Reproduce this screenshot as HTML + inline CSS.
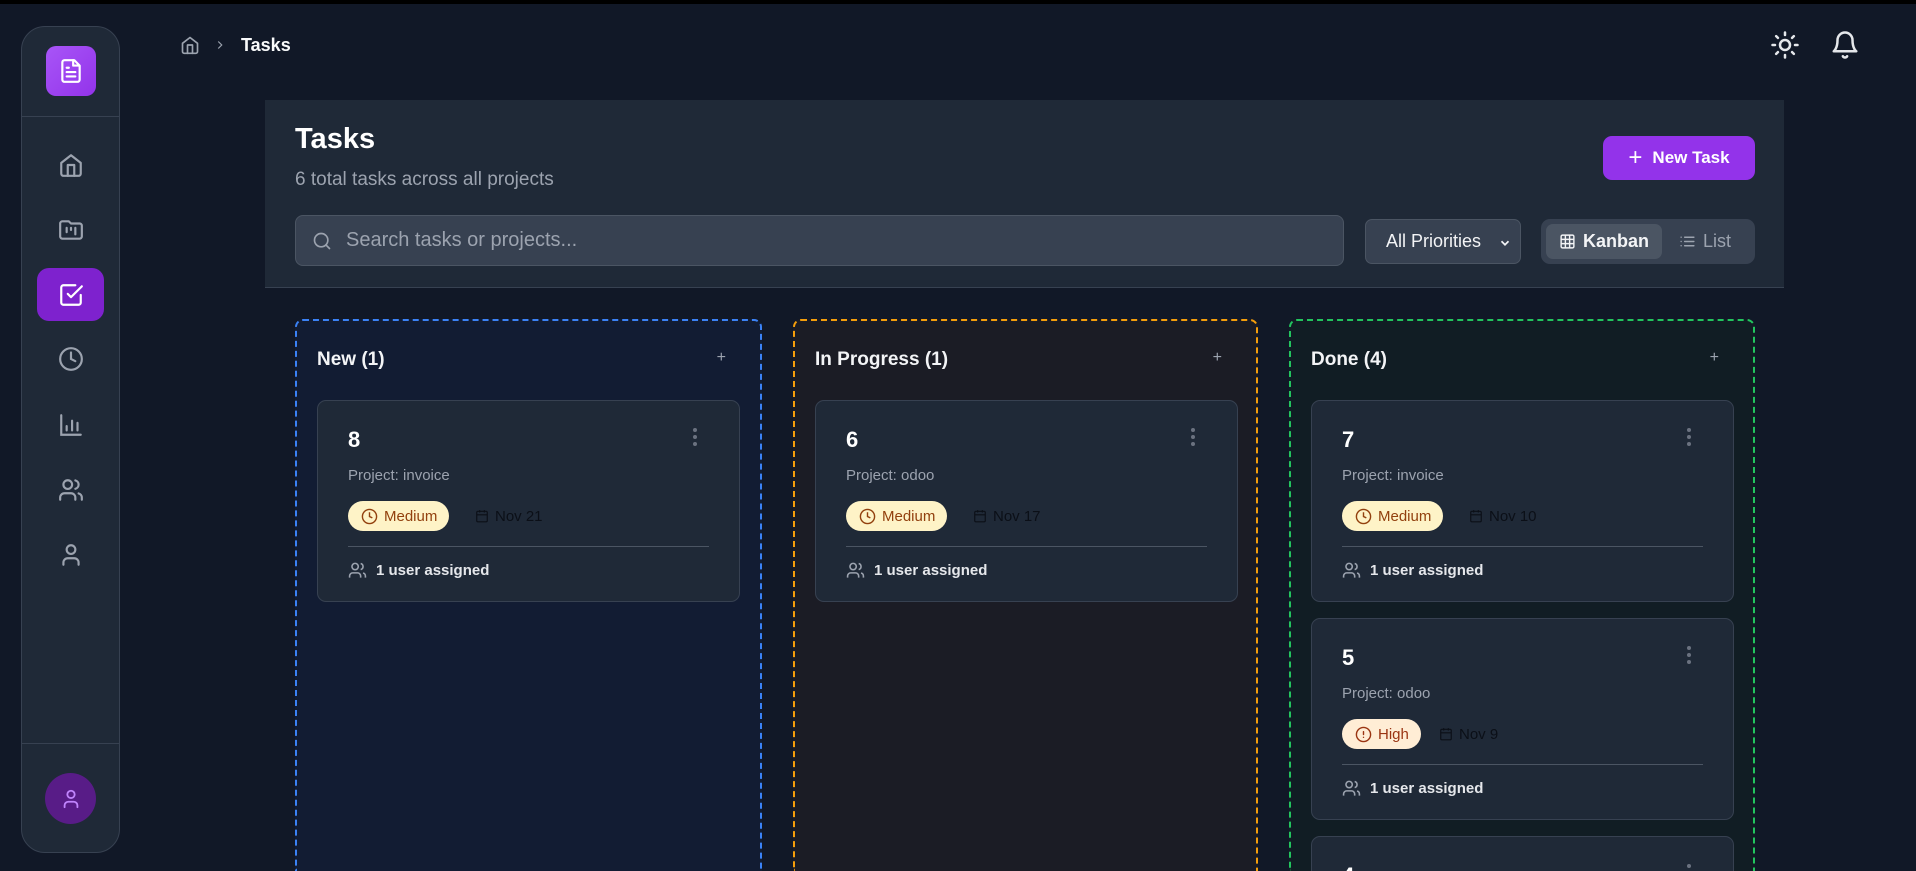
<!DOCTYPE html>
<html><head><meta charset="utf-8"><style>
*{box-sizing:border-box;margin:0;padding:0}
html,body{width:1916px;height:871px;overflow:hidden}
body{background:#111827;font-family:"Liberation Sans",sans-serif;color:#f9fafb;position:relative}
#wrap{position:relative;width:1916px;height:871px;overflow:hidden}
.abs{position:absolute}
svg{display:block}
.topline{left:0;top:0;width:1916px;height:4px;background:#000}
.side{left:21px;top:26px;width:99px;height:827px;background:#1f2937;border:1px solid #374151;border-radius:24px}
.logo{left:24px;top:19px;width:50px;height:50px;border-radius:10px;background:linear-gradient(135deg,#a855f7,#9333ea);display:flex;align-items:center;justify-content:center}
.sep{left:0;width:97px;height:1px;background:#374151}
.nav{left:15px;width:67px;height:53px;border-radius:12px;display:flex;align-items:center;justify-content:center}
.nav.act{background:#7e22ce}
.avatar{left:23px;top:746px;width:51px;height:51px;border-radius:50%;background:#581c87;display:flex;align-items:center;justify-content:center}
.panel{left:265px;top:100px;width:1519px;height:188px;background:#1f2937;border-bottom:1px solid #374151}
.btn{left:1603px;top:136px;width:152px;height:44px;background:#9333ea;border-radius:9px;display:flex;align-items:center;justify-content:center;gap:10px;font-weight:bold;font-size:17px;color:#fff}
.search{left:295px;top:215px;width:1049px;height:51px;background:#374151;border:1px solid #4b5563;border-radius:8px;display:flex;align-items:center;padding-left:16px;gap:14px;color:#9ca3af;font-size:20px}
.sel{left:1365px;top:219px;width:156px;height:45px;background:#374151;border:1px solid #4b5563;border-radius:7px;display:flex;align-items:center;padding-left:20px;font-size:18px;color:#f3f4f6}
.tog{left:1541px;top:219px;width:214px;height:45px;background:#374151;border-radius:9px}
.col{top:319px;height:552px;border:2px dashed;border-bottom:none;border-radius:8px 8px 0 0;overflow:hidden}
.colh{position:absolute;left:20px;top:28px;font-weight:bold;font-size:19px;color:#f3f4f6}
.plus{position:absolute;right:34px;top:28px;color:#9ca3af;font-size:16px}
.card{position:absolute;left:20px;width:423px;height:202px;background:#1f2937;border:1px solid #374151;border-radius:9px}
.num{position:absolute;left:30px;top:26px;font-weight:bold;font-size:22px;color:#fff}
.proj{position:absolute;left:30px;top:66px;font-size:15px;color:#9ca3af}
.badge{position:absolute;left:30px;top:100px;height:30px;border-radius:15px;display:flex;align-items:center;gap:6px;padding:0 12px 0 13px;font-size:15px}
.med{background:#fef3c7;color:#92400e}
.high{background:#ffedd5;color:#9a3412}
.date{position:absolute;top:100px;height:30px;display:flex;align-items:center;gap:6px;font-size:15px;color:#0b0f17}
.div{position:absolute;left:30px;right:30px;top:145px;height:1px;background:#4b5563}
.asg{position:absolute;left:30px;top:160px;display:flex;align-items:center;gap:9px;font-size:15px;font-weight:bold;color:#e5e7eb}
.keb{position:absolute;right:42px;top:27px;width:4px}
.keb i{display:block;width:4px;height:4px;border-radius:50%;background:#6b7280;margin-bottom:3px}
</style></head><body><div id="wrap">
<div class="abs topline"></div>

<div class="abs side">
 <div class="abs logo"><svg width="26" height="26" viewBox="0 0 24 24" fill="none" stroke="#fff" stroke-width="2" stroke-linecap="round" stroke-linejoin="round"><path d="M15 2H6a2 2 0 0 0-2 2v16a2 2 0 0 0 2 2h12a2 2 0 0 0 2-2V7z"/><path d="M14 2v5h5"/><path d="M10 9H8M16 13H8M16 17H8"/></svg></div>
 <div class="abs sep" style="top:89px"></div>
 <div class="abs nav" style="top:111px"><svg width="26" height="26" viewBox="0 0 24 24" fill="none" stroke="#9ca3af" stroke-width="2" stroke-linecap="round" stroke-linejoin="round"><path d="M3 10l9-7 9 7v10a2 2 0 0 1-2 2H5a2 2 0 0 1-2-2z"/><path d="M9 22V12h6v10"/></svg></div>
 <div class="abs nav" style="top:176px"><svg width="26" height="26" viewBox="0 0 24 24" fill="none" stroke="#9ca3af" stroke-width="2" stroke-linecap="round" stroke-linejoin="round"><path d="M4 20h16a2 2 0 0 0 2-2V8a2 2 0 0 0-2-2h-8L10 4H4a2 2 0 0 0-2 2v12a2 2 0 0 0 2 2z"/><path d="M8 10v4M12 10v2M16 10v6"/></svg></div>
 <div class="abs nav act" style="top:241px"><svg width="26" height="26" viewBox="0 0 24 24" fill="none" stroke="#fff" stroke-width="2" stroke-linecap="round" stroke-linejoin="round"><path d="M9 11l3 3L22 4"/><path d="M21 12v7a2 2 0 0 1-2 2H5a2 2 0 0 1-2-2V5a2 2 0 0 1 2-2h11"/></svg></div>
 <div class="abs nav" style="top:305px"><svg width="26" height="26" viewBox="0 0 24 24" fill="none" stroke="#9ca3af" stroke-width="2" stroke-linecap="round"><circle cx="12" cy="12" r="10"/><path d="M12 6v6l4 2"/></svg></div>
 <div class="abs nav" style="top:371px"><svg width="26" height="26" viewBox="0 0 24 24" fill="none" stroke="#9ca3af" stroke-width="2" stroke-linecap="round"><path d="M3 3v18h18M8 17v-4M13 17V8M18 17v-7"/></svg></div>
 <div class="abs nav" style="top:436px"><svg width="26" height="26" viewBox="0 0 24 24" fill="none" stroke="#9ca3af" stroke-width="2" stroke-linecap="round"><path d="M16 21v-2a4 4 0 0 0-4-4H6a4 4 0 0 0-4 4v2"/><circle cx="9" cy="7" r="4"/><path d="M22 21v-2a4 4 0 0 0-3-3.87M16 3.13a4 4 0 0 1 0 7.75"/></svg></div>
 <div class="abs nav" style="top:501px"><svg width="26" height="26" viewBox="0 0 24 24" fill="none" stroke="#9ca3af" stroke-width="2" stroke-linecap="round"><path d="M19 21v-2a4 4 0 0 0-4-4H9a4 4 0 0 0-4 4v2"/><circle cx="12" cy="7" r="4"/></svg></div>
 <div class="abs sep" style="top:716px"></div>
 <div class="abs avatar"><svg width="22" height="22" viewBox="0 0 24 24" fill="none" stroke="#c084fc" stroke-width="2" stroke-linecap="round"><path d="M19 21v-2a4 4 0 0 0-4-4H9a4 4 0 0 0-4 4v2"/><circle cx="12" cy="7" r="4"/></svg></div>
</div>

<div class="abs" style="left:180px;top:35px"><svg width="20" height="20" viewBox="0 0 24 24" fill="none" stroke="#9ca3af" stroke-width="2" stroke-linecap="round" stroke-linejoin="round"><path d="M3 10l9-7 9 7v10a2 2 0 0 1-2 2H5a2 2 0 0 1-2-2z"/><path d="M9 22V12h6v10"/></svg></div>
<div class="abs" style="left:213px;top:37px"><svg width="14" height="16" viewBox="0 0 24 24" fill="none" stroke="#9ca3af" stroke-width="2"><path d="M9 6l6 6-6 6"/></svg></div>
<div class="abs" style="left:241px;top:35px;font-weight:bold;font-size:18px">Tasks</div>
<div class="abs" style="left:1770px;top:30px"><svg width="30" height="30" viewBox="0 0 24 24" fill="none" stroke="#e5e7eb" stroke-width="2" stroke-linecap="round"><circle cx="12" cy="12" r="4"/><path d="M12 2v2M12 20v2M4.93 4.93l1.41 1.41M17.66 17.66l1.41 1.41M2 12h2M20 12h2M6.34 17.66l-1.41 1.41M19.07 4.93l-1.41 1.41"/></svg></div>
<div class="abs" style="left:1830px;top:30px"><svg width="30" height="30" viewBox="0 0 24 24" fill="none" stroke="#e5e7eb" stroke-width="2" stroke-linecap="round" stroke-linejoin="round"><path d="M6 8a6 6 0 0 1 12 0c0 7 3 9 3 9H3s3-2 3-9"/><path d="M10.3 21a1.94 1.94 0 0 0 3.4 0"/></svg></div>

<div class="abs panel"></div>
<div class="abs" style="left:295px;top:123px;font-weight:bold;font-size:29px;color:#fff">Tasks</div>
<div class="abs" style="left:295px;top:169px;font-size:19px;color:#9ca3af">6 total tasks across all projects</div>
<div class="abs btn"><span style="font-size:24px;font-weight:normal;line-height:1">+</span>New Task</div>
<div class="abs search"><svg width="20" height="20" viewBox="0 0 24 24" fill="none" stroke="#9ca3af" stroke-width="2" stroke-linecap="round"><circle cx="11" cy="11" r="8"/><path d="M21 21l-4.3-4.3"/></svg>Search tasks or projects...</div>
<div class="abs sel">All Priorities<svg style="position:absolute;right:8px;top:16px" width="14" height="14" viewBox="0 0 24 24" fill="none" stroke="#f3f4f6" stroke-width="3"><path d="M6 9l6 6 6-6"/></svg></div>
<div class="abs tog">
 <div class="abs" style="left:5px;top:5px;width:116px;height:35px;background:#4b5563;border-radius:7px;display:flex;align-items:center;justify-content:center;gap:7px;font-weight:bold;font-size:18px;color:#f3f4f6"><svg width="17" height="17" viewBox="0 0 24 24" fill="none" stroke="#f3f4f6" stroke-width="2"><rect x="3" y="3" width="18" height="18" rx="2"/><path d="M3 9h18M3 15h18M9 3v18M15 3v18"/></svg>Kanban</div>
 <div class="abs" style="left:138px;top:5px;height:35px;display:flex;align-items:center;gap:7px;font-size:18px;color:#9ca3af"><svg width="17" height="17" viewBox="0 0 24 24" fill="none" stroke="#9ca3af" stroke-width="2" stroke-linecap="round"><path d="M8 6h13M8 12h13M8 18h13M3 6h.01M3 12h.01M3 18h.01"/></svg>List</div>
</div>

<div class="abs col" style="left:295px;width:467px;border-color:#3b82f6;background:#121c33">
 <div class="colh">New (1)</div><div class="plus">+</div>
 <div class="card" style="top:79px"><div class="num">8</div><div class="keb"><i></i><i></i><i></i></div><div class="proj">Project: invoice</div>
  <div class="badge med"><svg width="17" height="17" viewBox="0 0 24 24" fill="none" stroke="#92400e" stroke-width="2"><circle cx="12" cy="12" r="10"/><path d="M12 6v6l4 2"/></svg>Medium</div>
  <div class="date" style="left:157px"><svg width="14" height="14" viewBox="0 0 24 24" fill="none" stroke="#0b0f17" stroke-width="2"><rect x="3" y="4" width="18" height="18" rx="2"/><path d="M16 2v4M8 2v4M3 10h18"/></svg>Nov 21</div>
  <div class="div"></div><div class="asg"><svg width="19" height="19" viewBox="0 0 24 24" fill="none" stroke="#9ca3af" stroke-width="2"><path d="M16 21v-2a4 4 0 0 0-4-4H6a4 4 0 0 0-4 4v2"/><circle cx="9" cy="7" r="4"/><path d="M22 21v-2a4 4 0 0 0-3-3.87M16 3.13a4 4 0 0 1 0 7.75"/></svg>1 user assigned</div></div>
</div>
<div class="abs col" style="left:793px;width:465px;border-color:#f59e0b;background:#1b1c25">
 <div class="colh">In Progress (1)</div><div class="plus">+</div>
 <div class="card" style="top:79px"><div class="num">6</div><div class="keb"><i></i><i></i><i></i></div><div class="proj">Project: odoo</div>
  <div class="badge med"><svg width="17" height="17" viewBox="0 0 24 24" fill="none" stroke="#92400e" stroke-width="2"><circle cx="12" cy="12" r="10"/><path d="M12 6v6l4 2"/></svg>Medium</div>
  <div class="date" style="left:157px"><svg width="14" height="14" viewBox="0 0 24 24" fill="none" stroke="#0b0f17" stroke-width="2"><rect x="3" y="4" width="18" height="18" rx="2"/><path d="M16 2v4M8 2v4M3 10h18"/></svg>Nov 17</div>
  <div class="div"></div><div class="asg"><svg width="19" height="19" viewBox="0 0 24 24" fill="none" stroke="#9ca3af" stroke-width="2"><path d="M16 21v-2a4 4 0 0 0-4-4H6a4 4 0 0 0-4 4v2"/><circle cx="9" cy="7" r="4"/><path d="M22 21v-2a4 4 0 0 0-3-3.87M16 3.13a4 4 0 0 1 0 7.75"/></svg>1 user assigned</div></div>
</div>
<div class="abs col" style="left:1289px;width:466px;border-color:#22c55e;background:#111d24">
 <div class="colh">Done (4)</div><div class="plus">+</div>
 <div class="card" style="top:79px"><div class="num">7</div><div class="keb"><i></i><i></i><i></i></div><div class="proj">Project: invoice</div>
  <div class="badge med"><svg width="17" height="17" viewBox="0 0 24 24" fill="none" stroke="#92400e" stroke-width="2"><circle cx="12" cy="12" r="10"/><path d="M12 6v6l4 2"/></svg>Medium</div>
  <div class="date" style="left:157px"><svg width="14" height="14" viewBox="0 0 24 24" fill="none" stroke="#0b0f17" stroke-width="2"><rect x="3" y="4" width="18" height="18" rx="2"/><path d="M16 2v4M8 2v4M3 10h18"/></svg>Nov 10</div>
  <div class="div"></div><div class="asg"><svg width="19" height="19" viewBox="0 0 24 24" fill="none" stroke="#9ca3af" stroke-width="2"><path d="M16 21v-2a4 4 0 0 0-4-4H6a4 4 0 0 0-4 4v2"/><circle cx="9" cy="7" r="4"/><path d="M22 21v-2a4 4 0 0 0-3-3.87M16 3.13a4 4 0 0 1 0 7.75"/></svg>1 user assigned</div></div>
 <div class="card" style="top:297px"><div class="num">5</div><div class="keb"><i></i><i></i><i></i></div><div class="proj">Project: odoo</div>
  <div class="badge high"><svg width="17" height="17" viewBox="0 0 24 24" fill="none" stroke="#9a3412" stroke-width="2" stroke-linecap="round"><circle cx="12" cy="12" r="10"/><path d="M12 8v4M12 16h.01"/></svg>High</div>
  <div class="date" style="left:127px"><svg width="14" height="14" viewBox="0 0 24 24" fill="none" stroke="#0b0f17" stroke-width="2"><rect x="3" y="4" width="18" height="18" rx="2"/><path d="M16 2v4M8 2v4M3 10h18"/></svg>Nov 9</div>
  <div class="div"></div><div class="asg"><svg width="19" height="19" viewBox="0 0 24 24" fill="none" stroke="#9ca3af" stroke-width="2"><path d="M16 21v-2a4 4 0 0 0-4-4H6a4 4 0 0 0-4 4v2"/><circle cx="9" cy="7" r="4"/><path d="M22 21v-2a4 4 0 0 0-3-3.87M16 3.13a4 4 0 0 1 0 7.75"/></svg>1 user assigned</div></div>
 <div class="card" style="top:515px"><div class="num">4</div><div class="keb"><i></i><i></i><i></i></div></div>
</div>
</div></body></html>
